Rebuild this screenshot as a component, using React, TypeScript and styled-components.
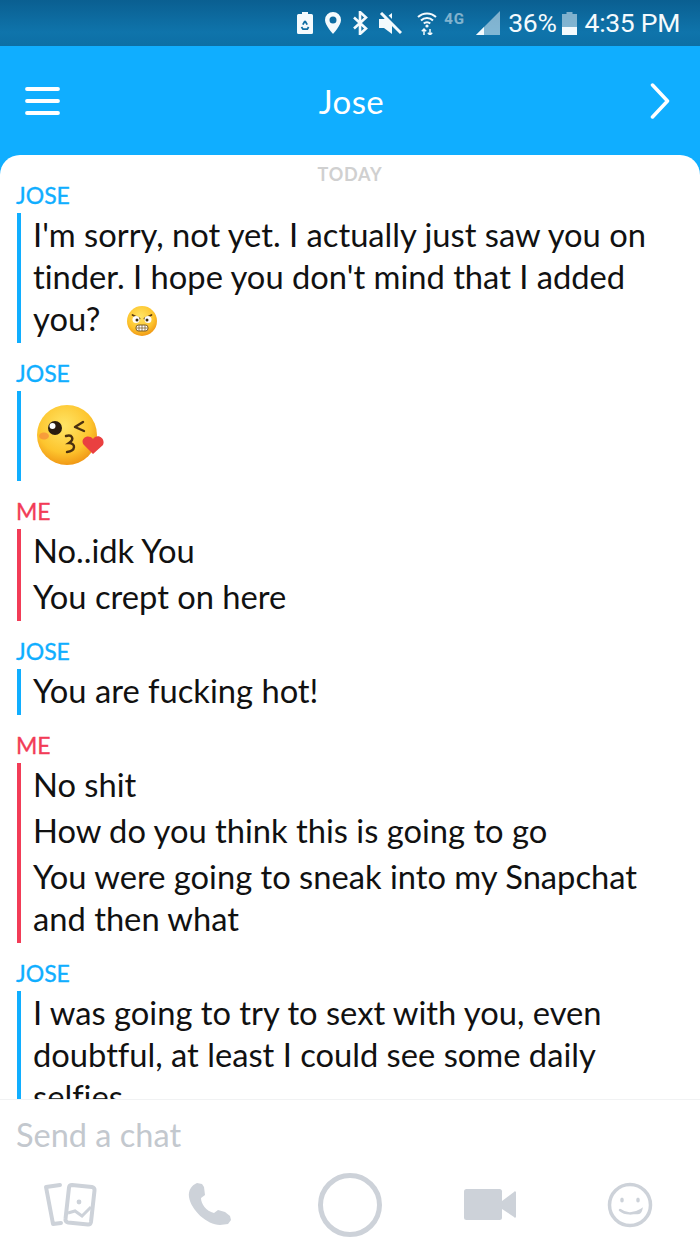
import React from "react";
import styled, { createGlobalStyle } from "styled-components";

const Global = createGlobalStyle`
  html, body { margin: 0; padding: 0; background: #fff; }
  * { box-sizing: border-box; }
`;
const Screen = styled.div`
  width: 700px; height: 1244px; display: flex; flex-direction: column; overflow: hidden;
  background: #10aeff; font-family: Lato, "Noto Sans", sans-serif; font-variant-ligatures: none;
`;
const StatusBar = styled.div`
  height: 46px; flex: none; display: flex; align-items: center; justify-content: flex-end;
  padding-right: 20px; color: #f4fafd; background: linear-gradient(#0a5f91, #0f74ab 70%, #0d6fa5);
  font-family: Roboto, sans-serif; font-size: 26.5px; line-height: 46px; letter-spacing: -0.3px;
`;
const StatusIcon = styled.svg<{ $gap?: number }>`
  flex: none; display: block; margin-left: ${p => p.$gap ?? 0}px;
`;
const StatusText = styled.span<{ $gap: number }>`
  margin-left: ${p => p.$gap}px; white-space: nowrap;
`;
const NetworkLabel = styled.span`
  width: 27px; margin: -8px 0 0 7px; font-size: 15px; line-height: 16px; font-weight: 700;
  letter-spacing: 1px; opacity: 0.5; white-space: nowrap; overflow: hidden;
`;
const Header = styled.header`
  height: 109px; flex: none; display: grid; grid-template-columns: 1fr auto 1fr; align-items: center;
  padding: 1px 30px 0 25px; color: #fff;
`;
const Menu = styled.svg`
  display: block;
`;
const Title = styled.h1`
  margin: 0 0 0 8px; font-size: 33px; font-weight: 400; line-height: 40px; letter-spacing: 0.4px;
`;
const Forward = styled.svg`
  justify-self: end; display: block;
`;
const Panel = styled.main`
  flex: 1; min-height: 0; display: flex; flex-direction: column; background: #fff;
  border-radius: 20px 20px 0 0; overflow: hidden;
`;
const Messages = styled.section`
  flex: 1; min-height: 0; overflow: hidden; padding-top: 10px;
`;
const DateLine = styled.div`
  text-align: center; font-size: 18px; font-weight: 700; height: 20px; line-height: 18px; letter-spacing: 0.8px; color: #d0d0d0;
`;
const Group = styled.div`
  & + & { margin-top: 20px; }
`;
const Sender = styled.div<{ $me?: boolean }>`
  height: 20px; line-height: 20px; margin: 0 0 8px 16px; font-size: 23px; font-weight: 400;
  -webkit-text-stroke: 0.35px currentColor;
  color: ${p => (p.$me ? "#f23c57" : "#10aeff")};
`;
const Thread = styled.div<{ $me?: boolean }>`
  display: flow-root; margin-left: 17px; padding-left: 12px; border-left: 4px solid ${p => (p.$me ? "#f23c57" : "#10aeff")};
`;
const Line = styled.p`
  margin: 0; padding: 1px 0 3px; font-size: 32.7px; line-height: 42px; color: #111; width: 640px;
`;
const InlineEmoji = styled.svg`
  display: inline-block; vertical-align: -6px; margin-left: 26px;
`;
const BigEmoji = styled.svg`
  display: block; margin: 12px 0 10px 3px;
`;
const Composer = styled.footer`
  flex: none; height: 145px; background: #fff; border-top: 1px solid #f1f2f3;
`;
const Placeholder = styled.div`
  height: 70px; padding: 15px 0 0 16px; font-size: 32.5px; line-height: 40px; color: #c3c8ce;
`;
const Tools = styled.div`
  display: grid; grid-template-columns: repeat(5, 140px); align-items: center; justify-items: center; height: 70px;
`;

const Face = ({ id }: { id: string }) => (
  <>
    <defs>
      <radialGradient id={id} cx="45%" cy="35%" r="68%">
        <stop offset="0" stopColor="#ffe566" />
        <stop offset="0.65" stopColor="#fdc52e" />
        <stop offset="1" stopColor="#ef9312" />
      </radialGradient>
    </defs>
    <circle cx="31" cy="32" r="30" fill={`url(#${id})`} />
  </>
);

export default function App() {
  return (
    <Screen>
      <Global />
      <StatusBar>
        <StatusIcon width="16" height="22" viewBox="0 0 16 22">
          <path d="M5 0h6v2h3.500a1.500 1.500 0 0 1 1.500 1.500V20.500a1.500 1.500 0 0 1-1.500 1.500h-13A1.500 1.500 0 0 1 0 20.500V3.500A1.500 1.500 0 0 1 1.500 2H5z" fill="#f4fafd" />
          <path d="M8 9l2.200 3.600M8 9l-2.200 3.600M4.500 15l1.500 2.200h4.300l1.300-2.200" stroke="#0f6da3" strokeWidth="1.800" fill="none" />
        </StatusIcon>
        <StatusIcon $gap={12} width="16" height="22" viewBox="0 0 16 22">
          <path fillRule="evenodd" d="M8 0a8 8 0 0 1 8 8c0 5.500-8 14-8 14S0 13.500 0 8a8 8 0 0 1 8-8zm0 4.500a3.500 3.500 0 1 0 0 7 3.500 3.500 0 0 0 0-7z" fill="#f4fafd" />
        </StatusIcon>
        <StatusIcon $gap={11} width="16" height="24" viewBox="0 0 16 24">
          <path d="M2 6.500l12 11-6 5.500V1l6 5.500-12 11" stroke="#f4fafd" strokeWidth="2.600" fill="none" />
        </StatusIcon>
        <StatusIcon $gap={11} width="23" height="23" viewBox="0 0 23 23">
          <path d="M0 7h5l8-6v21l-8-6H0z" fill="#f4fafd" />
          <path d="M5 1l18 18" stroke="#0f6da3" strokeWidth="3" />
          <path d="M2 1l20 20" stroke="#f4fafd" strokeWidth="3" />
        </StatusIcon>
        <StatusIcon $gap={15} width="20" height="24" viewBox="0 0 20 24">
          <path d="M1 6a13 13 0 0 1 18 0M4 9.500a8.500 8.500 0 0 1 12 0M6.800 12.500a4.500 4.500 0 0 1 6.400 0" stroke="#f4fafd" strokeWidth="2" fill="none" />
          <circle cx="10" cy="15" r="1.600" fill="#f4fafd" />
          <path d="M7 18v6M4.800 20.200L7 18l2.200 2.200M13 24v-6M10.800 21.800l2.200 2.200 2.200-2.200" stroke="#f4fafd" strokeWidth="1.500" fill="none" />
        </StatusIcon>
        <NetworkLabel>4G</NetworkLabel>
        <StatusIcon $gap={5} width="24" height="24" viewBox="0 0 24 24">
          <path d="M24 0v24H0z" fill="#f4fafd" opacity=".5" />
          <path d="M8 16v8H0z" fill="#f4fafd" />
        </StatusIcon>
        <StatusText $gap={8}>36%</StatusText>
        <StatusIcon $gap={5} width="15" height="23" viewBox="0 0 15 23">
          <path d="M4.500 0h6v2H15v21H0V2h4.500z" fill="#f4fafd" opacity=".5" />
          <path d="M0 15h15v8H0z" fill="#f4fafd" />
        </StatusIcon>
        <StatusText $gap={8}>4:35 PM</StatusText>
      </StatusBar>

      <Header>
        <Menu width="35" height="28" viewBox="0 0 35 28">
          <path d="M2 2h31M2 14h31M2 26h31" stroke="#fff" strokeWidth="3.800" strokeLinecap="round" />
        </Menu>
        <Title>Jose</Title>
        <Forward width="20" height="36" viewBox="0 0 20 36">
          <path d="M2.500 2l15 16-15 16" stroke="#fff" strokeWidth="3.500" strokeLinecap="round" strokeLinejoin="round" fill="none" />
        </Forward>
      </Header>

      <Panel>
        <Messages>
          <DateLine>TODAY</DateLine>
          <Group>
            <Sender>JOSE</Sender>
            <Thread>
              <Line>
                I'm sorry, not yet. I actually just saw you on tinder. I hope you don't mind that I added you?
                <InlineEmoji width="32" height="32" viewBox="0 0 62 64">
                  <Face id="angry" />
                  <path d="M12 20l14 7M50 20l-14 7" stroke="#5a3a10" strokeWidth="3.500" strokeLinecap="round" />
                  <circle cx="19" cy="29" r="7" fill="#fff" /><circle cx="43" cy="29" r="7" fill="#fff" />
                  <circle cx="21" cy="30" r="3" fill="#3a2a10" /><circle cx="41" cy="30" r="3" fill="#3a2a10" />
                  <rect x="19" y="40" width="24" height="12" rx="5" fill="#fff" stroke="#7a5a20" strokeWidth="2" />
                  <path d="M31 40v12M25 40v12M37 40v12M19 46h24" stroke="#7a5a20" strokeWidth="1.500" />
                </InlineEmoji>
              </Line>
            </Thread>
          </Group>
          <Group>
            <Sender>JOSE</Sender>
            <Thread>
              <BigEmoji width="68" height="68" viewBox="0 0 68 68">
                <Face id="kiss" />
                <ellipse cx="8" cy="33" rx="5" ry="3.500" fill="#f58a3c" opacity=".7" />
                <circle cx="19" cy="25" r="7" fill="#2a1c10" />
                <circle cx="16.500" cy="23" r="3" fill="#fff" />
                <path d="M47 19l-8 5 9 4" stroke="#4a3010" strokeWidth="2.400" strokeLinecap="round" strokeLinejoin="round" fill="none" />
                <path d="M30 33c6-2 9 3 3 7 7 0 7 8-2 9" stroke="#4a3010" strokeWidth="2.400" strokeLinecap="round" fill="none" />
                <path d="M57 51l-9-9c-5-6 4-12 9-6 4-6 13-1 10 6z" fill="#ea4040" />
              </BigEmoji>
            </Thread>
          </Group>
          <Group>
            <Sender $me>ME</Sender>
            <Thread $me>
              <Line>No..idk You</Line>
              <Line>You crept on here</Line>
            </Thread>
          </Group>
          <Group>
            <Sender>JOSE</Sender>
            <Thread>
              <Line>You are fucking hot!</Line>
            </Thread>
          </Group>
          <Group>
            <Sender $me>ME</Sender>
            <Thread $me>
              <Line>No shit</Line>
              <Line>How do you think this is going to go</Line>
              <Line>You were going to sneak into my Snapchat and then what</Line>
            </Thread>
          </Group>
          <Group>
            <Sender>JOSE</Sender>
            <Thread>
              <Line>I was going to try to sext with you, even doubtful, at least I could see some daily selfies</Line>
            </Thread>
          </Group>
        </Messages>
        <Composer>
          <Placeholder>Send a chat</Placeholder>
          <Tools>
            <svg width="54" height="46" viewBox="0 0 54 46">
              <path d="M17 3L3 5l7 37 8-1" stroke="#cdd2d9" strokeWidth="4" strokeLinecap="round" strokeLinejoin="round" fill="none" />
              <path d="M29 3l20 2a3 3 0 0 1 2.500 3.500L48 40a3 3 0 0 1-3 2.500l-20-2a3 3 0 0 1-2.500-3.500L26 5.500A3 3 0 0 1 29 3z" stroke="#cdd2d9" strokeWidth="4" fill="none" />
              <circle cx="36" cy="20" r="2.400" fill="#cdd2d9" />
              <path d="M25 31l7-2 7 5 9-9" stroke="#cdd2d9" strokeWidth="3" fill="none" />
            </svg>
            <svg width="46" height="46" viewBox="0 0 46 46">
              <path d="M10 1l5 1 2 3 1 8-4 3c0 6 5 13 13 15l4-3 7 2 5 4 1 4-3 4-8 1C20 43 4 28 2 15 1 8 5 3 10 1z" fill="#cdd2d9" />
            </svg>
            <svg width="64" height="64" viewBox="0 0 64 64">
              <circle cx="32" cy="32" r="29.500" stroke="#cdd2d9" strokeWidth="5" fill="none" />
            </svg>
            <svg width="52" height="32" viewBox="0 0 52 32">
              <rect x="0" y="0" width="38" height="31" rx="2.500" fill="#cdd2d9" />
              <path d="M38 12l12-9a1 1 0 0 1 2 1v23a1 1 0 0 1-2 1l-12-8z" fill="#cdd2d9" />
            </svg>
            <svg width="46" height="46" viewBox="0 0 46 46">
              <circle cx="23" cy="23" r="20.500" stroke="#cdd2d9" strokeWidth="3.500" fill="none" />
              <ellipse cx="15" cy="18" rx="1.800" ry="2.500" fill="#cdd2d9" />
              <ellipse cx="31" cy="18" rx="1.800" ry="2.500" fill="#cdd2d9" />
              <path d="M13 28c5 4 13 5 21 0-1 4-3 3-5 3" stroke="#cdd2d9" strokeWidth="2.500" strokeLinecap="round" fill="none" />
            </svg>
          </Tools>
        </Composer>
      </Panel>
    </Screen>
  );
}
